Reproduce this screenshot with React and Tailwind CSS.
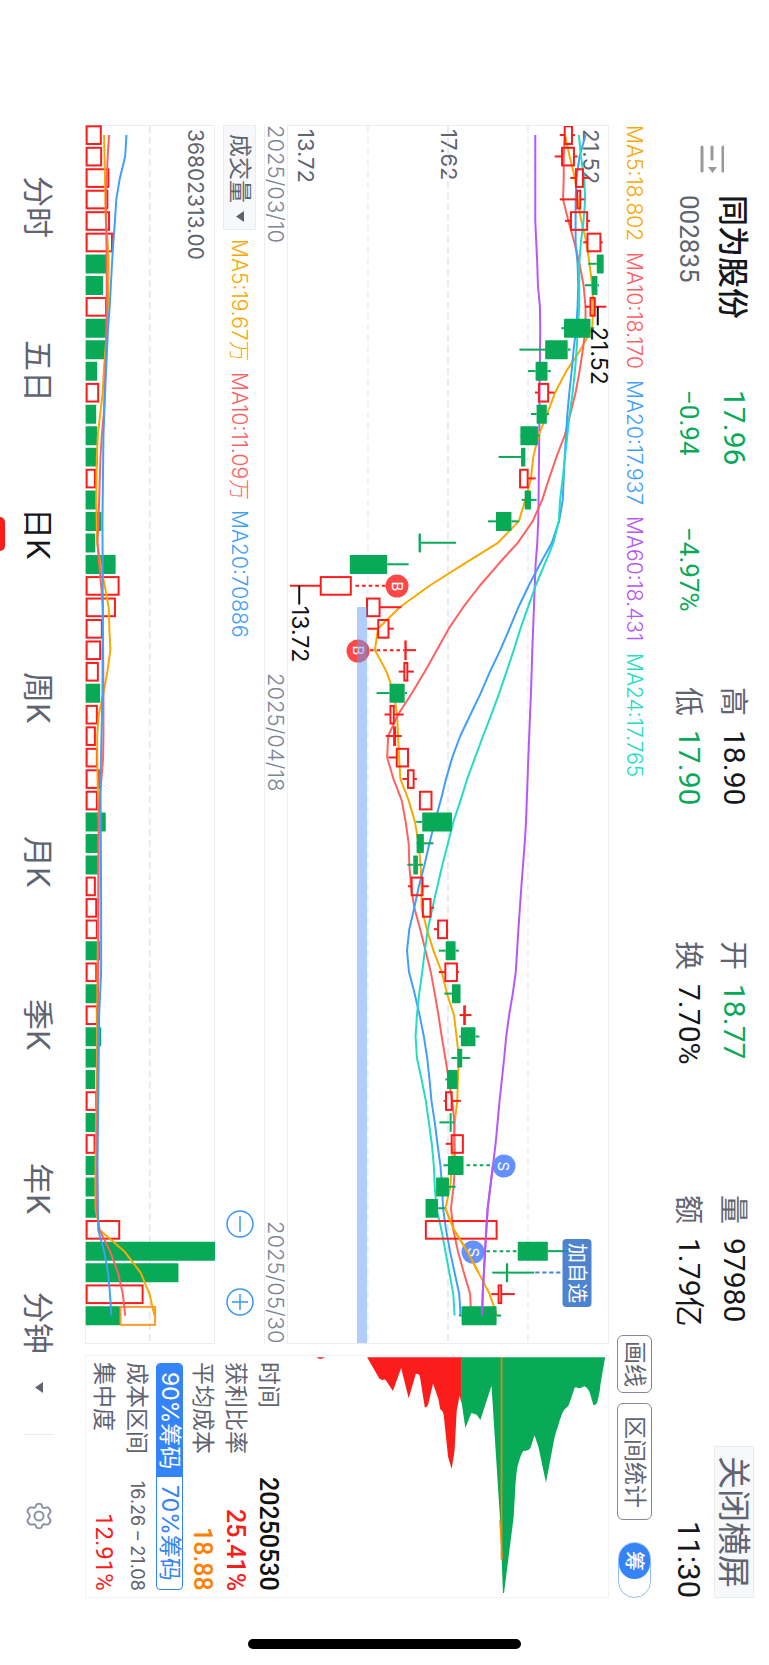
import { useState } from 'react'
import clsx from 'clsx'

// chart units: three per pixel, sessions run down the page, price grows to the right
const STEP = 64.5
const FIRST = 72
const PRICE_BOX = { x: 80, y: 45, w: 968, h: 3657 }
const VOLUME_BOX = { x: 256, y: 45, w: 389, h: 3657 }

const rowY = (i) => FIRST + i * STEP

const GREEN = '#08aa58'
const RED = '#fb1c1c'
const ORANGE = '#f8a800'
const CORAL = '#ff6161'
const BLUE = '#409efc'
const PURPLE = '#b657fb'
const TEAL = '#22dcc4'

// [low, body start, body end, high, up]
const candles = [
  [902, 916, 940, 948, 1], [887, 908, 946, 956, 1], [934, 950, 973, 994, 1], [902, 954, 965, 977, 1],
  [918, 935, 986, 994, 1], [973, 985, 1026, 1032, 1], [988, 1014, 1035, 1035, 0], [978, 999, 1016, 1021, 0],
  [978, 994, 1009, 1043, 1], [907, 915, 995, 1006, 0], [780, 858, 926, 935, 0], [806, 829, 865, 875, 0],
  [827, 838, 868, 886, 1], [815, 832, 863, 870, 0], [781, 783, 836, 842, 0], [717, 785, 798, 798, 0],
  [779, 781, 806, 829, 1], [787, 796, 815, 832, 0], [685, 709, 756, 778, 0], [475, 475, 482, 588, 0],
  [267, 267, 380, 445, 0], [86, 178, 271, 271, 1], [318, 318, 358, 423, 1], [320, 352, 385, 400, 1],
  [434, 434, 435, 467, 1], [415, 431, 442, 461, 1], [348, 387, 433, 440, 0], [372, 389, 401, 430, 1],
  [376, 400, 405, 424, 1], [384, 408, 444, 444, 1], [426, 442, 461, 470, 1], [478, 478, 515, 515, 1],
  [468, 486, 576, 576, 0], [468, 469, 491, 520, 0], [441, 459, 473, 488, 0], [443, 453, 488, 506, 1],
  [486, 487, 512, 522, 1], [521, 533, 562, 562, 1], [536, 557, 587, 597, 0], [536, 555, 592, 597, 1],
  [553, 576, 602, 602, 0], [599, 612, 616, 635, 1], [598, 603, 647, 659, 0], [574, 592, 607, 631, 0],
  [556, 561, 593, 594, 0], [551, 557, 576, 603, 1], [538, 569, 575, 584, 0], [557, 574, 610, 610, 1],
  [550, 564, 611, 611, 0], [528, 528, 567, 587, 0], [496, 496, 534, 556, 0], [496, 496, 712, 712, 1],
  [775, 775, 866, 930, 0], [698, 739, 746, 825, 0], [695, 716, 726, 766, 1], [597, 605, 711, 725, 0],
]

const volumes = [
  302, 303, 325, 322, 327, 336, 318, 308, 318, 320, 316, 290, 294, 287, 290, 292, 284, 286, 303, 284,
  346, 356, 345, 305, 300, 293, 299, 290, 284, 290, 296, 290, 316, 294, 294, 284, 288, 290, 299, 288,
  290, 290, 302, 291, 284, 288, 286, 283, 286, 283, 288, 358, 648, 537, 429, 360,
]

const every = (values) => values.map((x, i) => [i, x])

const priceLines = [
  { color: PURPLE, points: [[0, 828], [4, 828], [6, 834], [7, 836], [8, 842], [9, 843], [12, 841], [14, 840], [17, 838], [18, 837], [19, 834], [20, 829], [22, 824], [24, 819], [26, 815], [29, 807], [32, 800], [33, 796], [35, 786], [37, 777], [39, 769], [40, 760], [41, 749], [42, 740], [43, 734], [45, 720], [47, 708], [48, 700], [50, 684], [52, 676], [54, 669], [55, 667]] },
  { color: ORANGE, points: every([918, 932, 948, 956, 967, 983, 992, 1000, 1004, 1000, 965, 922, 888, 864, 838, 822, 815, 798, 778, 715, 610, 508, 418, 352, 343, 378, 400, 410, 413, 416, 420, 445, 464, 475, 481, 484, 484, 500, 520, 545, 561, 582, 590, 597, 594, 592, 584, 581, 575, 571, 556, 582, 622, 656, 690, 712]) },
  { color: CORAL, points: every([918, 914, 914, 912, 928, 946, 962, 974, 980, 980, 972, 962, 950, 934, 917, 892, 870, 849, 820, 775, 716, 660, 610, 566, 530, 494, 455, 413, 383, 380, 399, 424, 436, 445, 447, 452, 462, 480, 496, 512, 524, 535, 545, 556, 566, 577, 583, 584, 585, 581, 573, 580, 594, 612, 631, 634]) },
  { color: BLUE, points: every([980, 962, 953, 950, 950, 950, 956, 958, 956, 952, 944, 938, 931, 925, 921, 917, 914, 911, 900, 878, 842, 808, 777, 750, 722, 691, 663, 632, 601, 577, 558, 542, 524, 508, 493, 476, 462, 447, 440, 446, 463, 478, 491, 501, 508, 514, 524, 532, 541, 546, 549, 558, 570, 584, 598, 602]) },
  { color: TEAL, points: every([960, 966, 976, 979, 974, 966, 961, 961, 961, 957, 953, 948, 941, 932, 925, 918, 911, 903, 899, 883, 856, 829, 806, 783, 763, 741, 719, 695, 670, 646, 622, 602, 580, 564, 547, 532, 517, 503, 494, 486, 477, 470, 466, 470, 484, 497, 506, 515, 521, 524, 529, 544, 556, 568, 580, 584]) },
]

const volumeLines = [
  { color: ORANGE, points: [[0, 311], [3, 315], [4, 316], [5, 322], [6, 325], [8, 323], [9, 321], [10, 315], [11, 310], [12, 307], [13, 299], [14, 292], [15, 289], [17, 287], [19, 290], [20, 300], [21, 313], [22, 325], [23, 327], [24, 330], [25, 321], [26, 309], [27, 295], [28, 290], [30, 291], [32, 295], [36, 293], [41, 290], [44, 289], [46, 287], [48, 285], [50, 285], [51, 297], [52, 372], [53, 422], [54, 449], [55, 464]] },
  { color: CORAL, points: [[0, 326], [1, 322], [2, 319], [3, 316], [5, 318], [6, 319], [8, 319], [10, 317], [13, 310], [14, 304], [15, 300], [17, 296], [19, 291], [20, 296], [21, 302], [22, 307], [26, 309], [28, 309], [29, 308], [30, 303], [31, 297], [33, 294], [38, 294], [42, 292], [46, 290], [50, 288], [51, 297], [52, 329], [53, 353], [54, 368], [55, 375]] },
  { color: BLUE, points: [[0, 379], [1, 375], [2, 359], [3, 348], [4, 344], [5, 339], [6, 335], [8, 328], [9, 323], [10, 320], [12, 314], [14, 309], [18, 306], [22, 307], [26, 306], [30, 300], [36, 302], [39, 302], [41, 296], [44, 294], [48, 291], [51, 293], [52, 311], [53, 323], [54, 329], [55, 333]] },
]

// trade marks on the price chart: [x, session, dotted from, dotted to]
const trades = [
  { kind: 'B', x: 411, i: 21, from: 284, to: 380 },
  { kind: 'B', x: 293, i: 24, from: 328, to: 432 },
  { kind: 'S', x: 733, i: 48, from: 620, to: 700 },
  { kind: 'S', x: 640, i: 52, from: 680, to: 775 },
]

const priceAverages = [
  { label: 'MA5:18.802', cls: 'text-[#f8a800]' },
  { label: 'MA10:18.170', cls: 'text-[#ff6161]' },
  { label: 'MA20:17.937', cls: 'text-[#409efc]' },
  { label: 'MA60:18.431', cls: 'text-[#b657fb]' },
  { label: 'MA24:17.765', cls: 'text-[#22dcc4]' },
]

const volumeAverages = [
  { label: 'MA5:19.67万', cls: 'text-[#f8a800]' },
  { label: 'MA10:11.09万', cls: 'text-[#ff6161]' },
  { label: 'MA20:70886', cls: 'text-[#409efc]' },
]

const periods = ['分时', '五日', '日K', '周K', '月K', '季K', '年K', '分钟']

const toPoints = (points) => points.map(([i, x]) => `${x},${rowY(i)}`).join(' ')

const placeOnPrice = (x, y) => ({
  left: `${((x - PRICE_BOX.x) / PRICE_BOX.w) * 100}%`,
  top: `${((y - PRICE_BOX.y) / PRICE_BOX.h) * 100}%`,
})

function Quote({ label, value, down }) {
  return (
    <div className="flex items-center gap-[14px]">
      <span className="text-[29px] text-[#606470]">{label}</span>
      <span className={clsx('font-[Roboto,"Noto_Sans_CJK_SC",sans-serif] text-[30px]', down ? 'text-[#08aa58]' : 'text-[#16171a]')}>{value}</span>
    </div>
  )
}

function Header() {
  return (
    <header className="flex pr-[13px] pt-5">
      <button type="button" aria-label="列表" className="mr-8 flex h-[50px] w-6 shrink-0 self-start">
        <svg viewBox="0 0 24 28" className="h-7 w-6" stroke="#999" strokeWidth="3" strokeLinecap="round">
          <path d="M2 2v24M23 2v24M12 2v12" />
          <path d="M8 22h9l-4.500 6z" fill="#999" stroke="none" />
        </svg>
      </button>
      <div className="grid flex-1 auto-rows-[45px] grid-cols-[195fr_137fr_160fr_254fr_254fr_403fr] items-center whitespace-nowrap">
        <h1 className="text-[31px] font-medium text-[#16171a]">同为股份</h1>
        <span className="font-[Roboto,sans-serif] text-[30px] text-[#08aa58]">17.96</span>
        <span />
        <Quote label="高" value="18.90" />
        <Quote label="开" value="18.77" down />
        <div className="flex items-center justify-between">
          <Quote label="量" value="97980" />
          <button type="button" className="flex h-[152px] w-10 items-center justify-center border border-[#e9edf3] bg-[#f6f8fa] text-[33px] text-[#606470]">关闭横屏</button>
        </div>
        <span className="font-[Roboto,sans-serif] text-[26px] text-[#606470]">002835</span>
        <span className="font-[Roboto,sans-serif] text-[26px] text-[#08aa58]">−0.94</span>
        <span className="font-[Roboto,sans-serif] text-[26px] text-[#08aa58]">−4.97%</span>
        <Quote label="低" value="17.90" down />
        <Quote label="换" value="7.70%" />
        <div className="flex items-center justify-between">
          <Quote label="额" value="1.79亿" />
          <time className="font-[Roboto,sans-serif] text-[31px] text-[#16171a]">11:30</time>
        </div>
      </div>
    </header>
  )
}

function Toolbar() {
  const [chips, setChips] = useState(true)
  return (
    <div className="mr-[7px] flex w-[50px] items-center whitespace-nowrap">
      <div className="flex flex-1 gap-[11px] text-[21px] font-light">
        {priceAverages.map((m) => <span key={m.label} className={m.cls}>{m.label}</span>)}
      </div>
      <button type="button" className="flex h-[58px] w-[35px] items-center justify-center rounded-md border border-[#858995] text-[23px] text-[#606470]">画线</button>
      <button type="button" className="mt-[10px] flex h-[117px] w-[35px] items-center justify-center rounded-md border border-[#858995] text-[23px] text-[#606470]">区间统计</button>
      <button
        type="button"
        role="switch"
        aria-checked={chips}
        onClick={() => setChips(!chips)}
        className="mt-[22px] flex h-[56px] w-[33px] rounded-full border border-[#8fbcfa]"
      >
        <span className="flex h-9 w-[31px] items-center justify-center rounded-full bg-[#3484f7] text-[20px] font-medium text-white">筹</span>
      </button>
    </div>
  )
}

function PriceChart() {
  return (
    <section className="relative min-w-0 flex-1 border border-[#e9edf4]">
      <div className="absolute inset-0 flex flex-col justify-between pl-[5px] pr-1 pt-[3px] text-[22px] leading-[26px] text-[#606470]">
        <span>21.52</span>
        <span>17.62</span>
        <span>13.72</span>
      </div>
      <svg viewBox="80 45 968 3657" preserveAspectRatio="none" className="absolute inset-0 h-full w-full">
        <g stroke="#e8ebf1" strokeWidth="4" strokeDasharray="22 11">
          <path d="M322 45V3702M806 45V3702" />
          <path d="M564 45V3702" strokeWidth="6" />
        </g>
        {priceLines.map((l) => (
          <polyline key={l.color} points={toPoints(l.points)} fill="none" stroke={l.color} strokeWidth="6" strokeLinejoin="round" />
        ))}
        {candles.map(([low, a, b, high, up], i) => {
          const y = rowY(i)
          const color = up ? RED : GREEN
          return (
            <g key={i} stroke={color} strokeWidth="6">
              {low < a && <path d={`M${low} ${y}H${a}`} />}
              {high > b && <path d={`M${b} ${y}H${high}`} />}
              {up
                ? <rect x={a + 1} y={y - 26} width={Math.max(b - a - 2, 1)} height="53" fill="none" />
                : <rect x={a} y={y - 28} width={b - a} height="57" rx="2" fill={color} stroke="none" />}
            </g>
          )
        })}
        {trades.map((t) => (
          <path key={t.i} d={`M${t.from} ${rowY(t.i)}H${t.to}`} stroke={t.kind === 'B' ? RED : GREEN} strokeWidth="6" strokeDasharray="11 9" />
        ))}
        <path d={`M828 ${rowY(53)}H912`} stroke="#4b82d2" strokeWidth="6" strokeDasharray="13 8" />
        <g stroke="#111" strokeWidth="6">
          <path d={`M1017 ${rowY(8)}v56M114 ${rowY(21)}v56`} />
        </g>
      </svg>
      {trades.map((t) => (
        <span
          key={t.i}
          style={placeOnPrice(t.x, rowY(t.i) + 2)}
          className={clsx('absolute flex size-[23px] -translate-1/2 items-center justify-center rounded-full text-[15px] leading-none text-white', t.kind === 'B' ? 'bg-[#ff4747]' : 'bg-[#6590ff]')}
        >
          {t.kind}
        </span>
      ))}
      <svg viewBox="80 45 968 3657" preserveAspectRatio="none" className="absolute inset-0 h-full w-full" fill="none" strokeWidth="6">
        <polyline points={toPoints(priceLines[0].points.slice(-5))} stroke={PURPLE} />
        <polyline points={toPoints(priceLines[1].points.slice(50, 54))} stroke={ORANGE} />
      </svg>
      <div style={{ top: placeOnPrice(0, rowY(22)).top }} className="absolute bottom-0 left-[21.5%] w-[3.1%] bg-[#619bf7]/50" />
      <span style={placeOnPrice(1018, 648)} className="absolute -translate-x-1/2 text-[23px] leading-none text-[#111]">21.52</span>
      <span style={placeOnPrice(114, 1486)} className="absolute -translate-x-1/2 text-[23px] leading-none text-[#111]">13.72</span>
      <button
        type="button"
        style={placeOnPrice(955, rowY(53))}
        className="absolute flex h-[68px] w-[29px] -translate-1/2 items-center justify-center whitespace-nowrap rounded bg-[#3b75cb]/90 text-[20px] leading-none text-white"
      >
        加自选
      </button>
    </section>
  )
}

function VolumeBar() {
  return (
    <div className="ml-2 mr-2 flex w-[33px] items-center whitespace-nowrap">
      <button type="button" className="flex h-[105px] w-[33px] items-center justify-center gap-2 border border-[#e9edf3] bg-[#f6f8fa] text-[23px] text-[#606470]">
        成交量
        <svg viewBox="0 0 8 11" className="h-[11px] w-2"><path d="M8 0v11L0 5.500z" fill="#606470" /></svg>
      </button>
      <div className="mt-[9px] flex flex-1 gap-[10px] text-[21px] font-light">
        {volumeAverages.map((m) => <span key={m.label} className={m.cls}>{m.label}</span>)}
      </div>
      <div className="mb-[28px] flex gap-[50px]">
        <button type="button" aria-label="缩小">
          <svg viewBox="0 0 28 28" className="size-7" fill="none" stroke="#3a97f8" strokeWidth="1.500"><circle cx="14" cy="14" r="13" /><path d="M14 6v16" /></svg>
        </button>
        <button type="button" aria-label="放大">
          <svg viewBox="0 0 28 28" className="size-7" fill="none" stroke="#3a97f8" strokeWidth="1.500"><circle cx="14" cy="14" r="13" /><path d="M14 6v16M6 14h16" /></svg>
        </button>
      </div>
    </div>
  )
}

function VolumeChart() {
  return (
    <section className="relative w-[130px] border border-[#e9edf4]">
      <svg viewBox={`${VOLUME_BOX.x} ${VOLUME_BOX.y} ${VOLUME_BOX.w} ${VOLUME_BOX.h}`} preserveAspectRatio="none" className="absolute inset-0 h-full w-full overflow-visible">
        <path d="M450 45V3702" stroke="#e8ebf1" strokeWidth="6" strokeDasharray="22 11" />
        {volumes.map((v, i) => candles[i][4]
          ? <rect key={i} x="258" y={rowY(i) - 26} width={v - 259} height="53" fill="none" stroke={RED} strokeWidth="6" />
          : <rect key={i} x="255" y={rowY(i) - 28} width={v - 255} height="57" rx="2" fill={GREEN} />)}
        <rect x="361" y={rowY(55) - 26} width="105" height="54" fill="none" stroke="#fd9a2b" strokeWidth="6" />
        {volumeLines.map((l) => (
          <polyline key={l.color} points={toPoints(l.points)} fill="none" stroke={l.color} strokeWidth="6" strokeLinejoin="round" />
        ))}
      </svg>
      <span className="absolute right-[6px] top-[3px] text-[21px] leading-[26px] text-[#606470]">36802313.00</span>
    </section>
  )
}

function ChipRow({ label, value, cls }) {
  return (
    <div className="flex w-[33px] items-center justify-between">
      <dt className="text-[23px] text-[#606470]">{label}</dt>
      <dd className={cls}>{value}</dd>
    </div>
  )
}

function ChipPanel() {
  const [share, setShare] = useState('90%筹码')
  return (
    <aside className="flex h-[243px] flex-col border border-[#f2f3f5] pl-px">
      <svg viewBox="605 44 901 730" preserveAspectRatio="none" className="h-full min-w-0 flex-1">
        <path fill={RED} d="M692 48h24l-8 4h-8zM834 48L868 112L875 117L885 115L906 150L929 80L950 172L970 98Q976 96 981 104L995 200Q1002 200 1005 188L1018 127L1033 175L1038 205Q1046 208 1048 226L1060 350L1070 386L1078 330L1084 210L1092 164L1098 190V48z" />
        <path fill={GREEN} d="M1097 48V178L1108 262L1125 217L1140 222L1150 238L1181 134L1205 540L1213 762H1216L1243 530L1248 430Q1252 380 1256 370Q1264 338 1270 332Q1284 332 1290 322L1301 284L1312 320L1333 428L1350 330Q1358 280 1365 262Q1378 212 1385 205Q1392 202 1397 192L1413 140Q1418 136 1422 142Q1432 142 1440 136Q1450 140 1456 158L1465 192Q1472 196 1476 184Q1484 150 1485 130L1498 48z" />
        <path d="M1209 48V660" stroke="#d98a14" strokeWidth="5" />
        <path d="M1204 540L1211 660" stroke="#ff8c0a" strokeWidth="3" />
      </svg>
      <dl className="flex flex-col whitespace-nowrap pb-[6px] pt-[6px]">
        <ChipRow label="时间" value="20250530" cls="font-[Roboto,sans-serif] text-[25px] font-medium text-[#111]" />
        <ChipRow label="获利比率" value="25.41%" cls="font-[Roboto,sans-serif] text-[25px] font-medium text-[#fb1c1c]" />
        <ChipRow label="平均成本" value="18.88" cls="font-[Roboto,sans-serif] text-[25px] font-medium text-[#ff8000]" />
      </dl>
      <div className="mb-[7px] mr-[3px] mt-[7px] flex w-[27px] overflow-hidden rounded border border-[#3484f7]">
        {['90%筹码', '70%筹码'].map((s) => (
          <button
            key={s}
            type="button"
            onClick={() => setShare(s)}
            className={clsx('flex flex-1 items-center justify-center whitespace-nowrap text-[23px] leading-none', share === s ? 'bg-[#3484f7] text-white' : 'text-[#3484f7]')}
          >
            {s}
          </button>
        ))}
      </div>
      <dl className="mr-[3px] flex flex-col whitespace-nowrap pb-[6px] pt-[6px]">
        <ChipRow label="成本区间" value="16.26 – 21.08" cls="text-lg leading-none text-[#606470]" />
        <ChipRow label="集中度" value="12.91%" cls="font-[Roboto,sans-serif] text-[24px] text-[#fb1c1c]" />
      </dl>
    </aside>
  )
}

function Periods() {
  const [active, setActive] = useState('日K')
  return (
    <nav className="flex w-[85px] pr-2">
      {periods.map((p) => (
        <button
          key={p}
          type="button"
          onClick={() => setActive(p)}
          className={clsx('relative flex flex-1 items-center justify-center gap-7 whitespace-nowrap text-[31px]', active === p ? 'text-[#16171a]' : 'text-[#606470]')}
        >
          {p}
          {p === '分钟' && <svg viewBox="0 0 8 11" className="mb-5 h-[11px] w-2"><path d="M8 0v11L0 5.500z" fill="#606470" /></svg>}
          {active === p && <span className="absolute left-0 h-[34px] w-[5px] rounded-r-full bg-[#fb1c1c]" />}
        </button>
      ))}
      <button type="button" aria-label="设置" className="relative flex flex-1 items-center justify-center">
        <span className="absolute top-0 h-px w-[30px] bg-[#e6eaf0]" />
        <svg viewBox="0 0 28 28" className="size-7" fill="none" stroke="#8d93a1" strokeWidth="2" strokeLinejoin="round">
          <path d="M11.500 2.500Q14 1 16.500 2.500L17.500 5.500Q19 6.500 20.500 5.500L23 5.500Q25.500 7 25.500 10L23.500 12.500Q23 14 23.500 15.500L25.500 18Q25.500 21 23 22.500L20 22.500Q18.500 22 17.500 23L16.500 25.500Q14 27 11.500 25.500L10.500 23Q9.500 22 8 22.500L5 22.500Q2.500 21 2.500 18L4.500 15.500Q5 14 4.500 12.500L2.500 10Q2.500 7 5 5.500L8 5.500Q9.500 6 10.500 5z" />
          <circle cx="14" cy="14" r="4.500" />
        </svg>
      </button>
    </nav>
  )
}

export default function App() {
  return (
    <div className='flex h-screen w-full overflow-hidden bg-white pt-[125px] font-[Inter,"Noto_Sans_CJK_SC",sans-serif] leading-none [text-orientation:sideways] [writing-mode:vertical-rl]'>
      <main className="flex min-h-0 w-full flex-1 flex-col">
        <Header />
        <Toolbar />
        <div className="flex min-w-0 flex-1 gap-[11px]">
          <div className="flex min-h-0 flex-1 flex-col">
            <PriceChart />
            <div className="flex w-[23px] items-center justify-between border-l border-[#e9edf4] text-[22px] font-light text-[#7d8494]">
              <time>2025/03/10</time>
              <time>2025/04/18</time>
              <time>2025/05/30</time>
            </div>
            <VolumeBar />
            <VolumeChart />
          </div>
          <ChipPanel />
        </div>
        <Periods />
      </main>
      <footer className="flex h-[67px] w-full items-center justify-center pt-6">
        <div className="mx-auto h-[10px] w-[273px] rounded-full bg-black" />
      </footer>
    </div>
  )
}
